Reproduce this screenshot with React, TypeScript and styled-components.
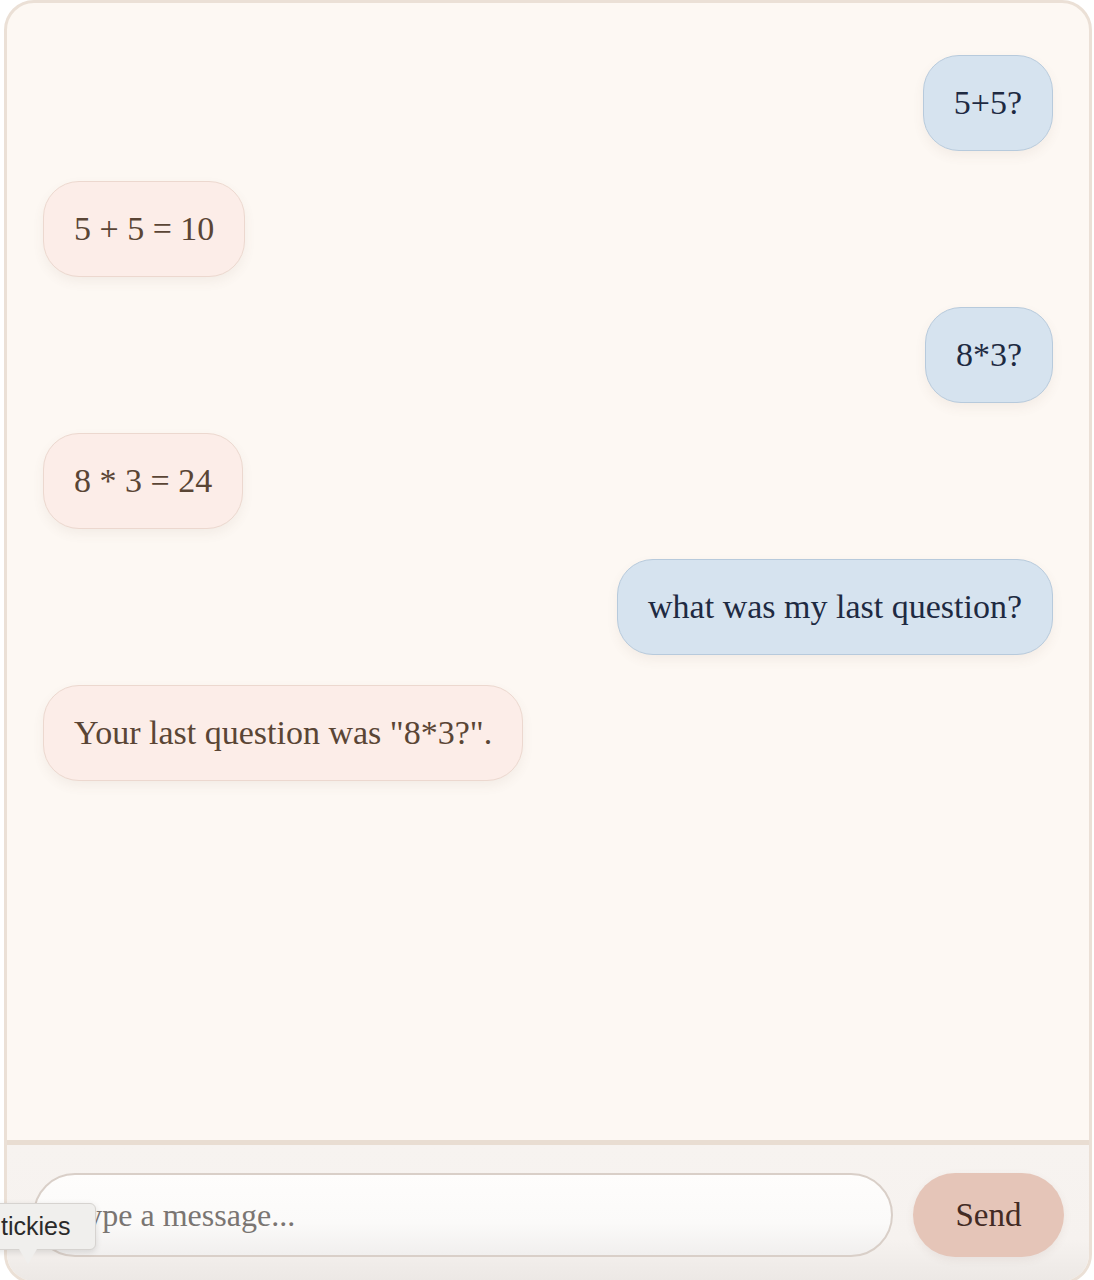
import React from "react";
import styled, { createGlobalStyle } from "styled-components";

const Global = createGlobalStyle`
  html, body { margin: 0; padding: 0; background: #ffffff; overflow: hidden; }
  body { font-family: "Liberation Serif", "DejaVu Serif", serif; }
`;

const Shell = styled.div`
  position: relative;
  box-sizing: border-box;
  width: 1088px;
  height: 1284px;
  margin: 0 0 0 4px;
  border: 3px solid #ebe0d6;
  border-radius: 30px;
  background: #fdf8f3;
  display: flex;
  flex-direction: column;
  overflow: hidden;
`;

const Messages = styled.div`
  flex: 0 0 1137px;
  box-sizing: border-box;
  padding: 52px 36px 0 36px;
  display: flex;
  flex-direction: column;
  gap: 30px;
`;

const Row = styled.div<{ $me: boolean }>`
  display: flex;
  justify-content: ${(p) => (p.$me ? "flex-end" : "flex-start")};
`;

const Bubble = styled.div<{ $me: boolean }>`
  box-sizing: border-box;
  height: 96px;
  padding: 0 30px;
  display: flex;
  align-items: center;
  border-radius: 36px;
  font-size: 34px;
  white-space: nowrap;
  background: ${(p) => (p.$me ? "#d6e3ef" : "#fcede8")};
  border: 1.5px solid ${(p) => (p.$me ? "#b7cadc" : "#ecd8cf")};
  color: ${(p) => (p.$me ? "#1e2a42" : "#5a4535")};
  box-shadow: 0 5px 12px rgba(120, 90, 70, 0.07);
`;

const Composer = styled.div`
  flex: 1;
  border-top: 5px solid #e9ddd2;
  background: linear-gradient(#f7f3f0 0%, #f6f2ef 70%, #ece8e5 100%);
  padding: 28px 25px 0 26px;
  display: flex;
  gap: 20px;
  align-items: flex-start;
`;

const Input = styled.input`
  box-sizing: border-box;
  flex: 1;
  height: 84px;
  border-radius: 42px;
  border: 2px solid #d9cfc8;
  background: linear-gradient(#fefdfc 0%, #fbfaf9 60%, #f1efee 100%);
  padding: 0 34px;
  font-family: "Liberation Serif", "DejaVu Serif", serif;
  font-size: 32px;
  color: #333;
  outline: none;
  &::placeholder { color: #7a7572; }
`;

const SendButton = styled.button`
  box-sizing: border-box;
  width: 151px;
  height: 84px;
  border: none;
  border-radius: 42px;
  background: #e5c5b8;
  color: #432b24;
  font-family: "Liberation Serif", "DejaVu Serif", serif;
  font-size: 33px;
  box-shadow: 0 3px 8px rgba(120, 80, 60, 0.08);
`;

const Tooltip = styled.div`
  position: absolute;
  left: -12px;
  top: 1203px;
  height: 47px;
  padding: 0 25px 0 12px;
  display: flex;
  align-items: center;
  box-sizing: border-box;
  background: #f0efed;
  border: 1px solid #d6d3d0;
  border-radius: 6px;
  font-family: "Liberation Sans", Arial, sans-serif;
  font-size: 25px;
  color: #2a2a2a;
  box-shadow: 0 2px 6px rgba(0, 0, 0, 0.12);
  &::after {
    content: "";
    position: absolute;
    left: 30px;
    bottom: -15px;
    width: 0;
    height: 0;
    border-left: 9px solid transparent;
    border-right: 9px solid transparent;
    border-top: 15px solid #f0efed;
  }
`;

const messages: { me: boolean; text: string }[] = [
  { me: true, text: "5+5?" },
  { me: false, text: "5 + 5 = 10" },
  { me: true, text: "8*3?" },
  { me: false, text: "8 * 3 = 24" },
  { me: true, text: "what was my last question?" },
  { me: false, text: 'Your last question was "8*3?".' },
];

export default function App() {
  return (
    <>
      <Global />
      <Shell>
        <Messages>
          {messages.map((m, i) => (
            <Row key={i} $me={m.me}>
              <Bubble $me={m.me}>{m.text}</Bubble>
            </Row>
          ))}
        </Messages>
        <Composer>
          <Input placeholder="Type a message..." />
          <SendButton>Send</SendButton>
        </Composer>
      </Shell>
      <Tooltip>tickies</Tooltip>
    </>
  );
}
